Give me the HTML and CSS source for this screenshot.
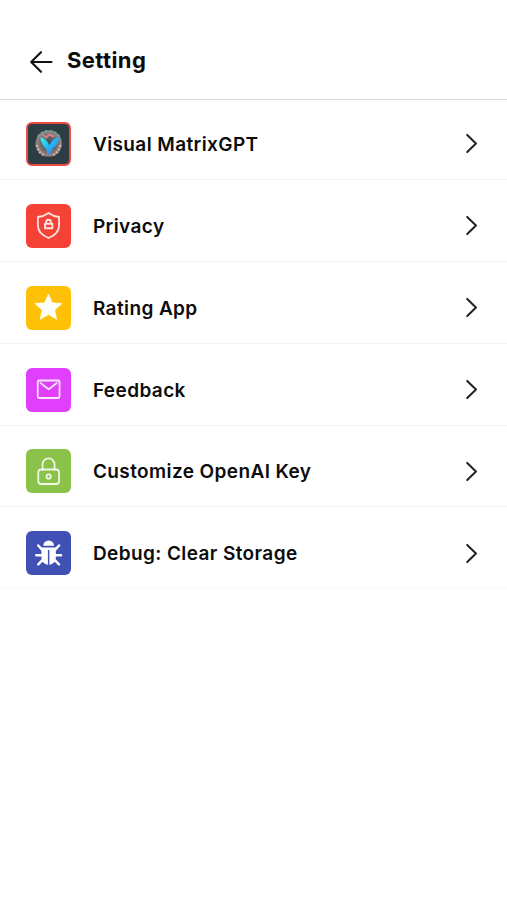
FILE: index.html
```html
<!DOCTYPE html>
<html lang="en">
<head>
<meta charset="utf-8">
<title>Setting</title>
<link rel="stylesheet" href="styles.css">
</head>
<body>
<header class="header">
  <svg class="back" viewBox="0 0 24 24"><path d="M12 2.2 2.2 12 12 21.8M2.2 12H22.5"/></svg>
  <h1 class="title">Setting</h1>
</header>
<main class="list">
  <div class="row">
    <svg class="tile tile-app" viewBox="2 2 40 40">
      <defs>
        <linearGradient id="wing" x1="0" y1="0" x2="1" y2="1"><stop offset="0" stop-color="#45f0e4"/><stop offset=".5" stop-color="#20b5f5"/><stop offset="1" stop-color="#5a62e0"/></linearGradient>
        <radialGradient id="orb"><stop offset="0" stop-color="#38505f"/><stop offset=".6" stop-color="#75686f"/><stop offset=".88" stop-color="#8f8c84"/><stop offset="1" stop-color="#25343a"/></radialGradient>
      </defs>
      <circle cx="22.500" cy="21.500" r="14" fill="url(#orb)"/>
      <path d="M11.500 15q4-6 11-6t11 6" fill="none" stroke="#6da294" stroke-width="2" stroke-dasharray="3 1.5"/>
      <path d="M10.500 23q2 8 7 10M34 23q-2 8-7 10" fill="none" stroke="#d5aaa8" stroke-width="2.500" stroke-dasharray="2 1.500"/>
      <path d="M16 12.500l4 3 3-3 5 2" fill="none" stroke="#d0838a" stroke-width="2"/>
      <path d="M14 15.500q6 0 9 8 3-7 10-8.500-1 8-6 11l-4 7q-2-1-3-6-5-4-6-11.500z" fill="url(#wing)"/>
    </svg>
    <span class="label">Visual MatrixGPT</span>
    <svg class="chevron" viewBox="0 0 14 22"><path d="M2 2l9.2 9L2 20"/></svg>
  </div>
  <div class="row">
    <svg class="tile line tile-privacy" viewBox="0 0 44 44"><path d="M22.3 9q4.700 3.500 10.500 4v8.500c0 6-4 10-10.500 12.500C15.800 31.500 11.700 27.500 11.700 21.500v-8.500q5.800-.5 10.600-4z"/><path d="M18.700 19.800h7.400v4.400h-7.400zM20 19v-1a2.300 2.300 0 0 1 4.600 0v1" stroke-width="1.900"/></svg>
    <span class="label">Privacy</span>
    <svg class="chevron" viewBox="0 0 14 22"><path d="M2 2l9.2 9L2 20"/></svg>
  </div>
  <div class="row">
    <svg class="tile tile-rating" viewBox="0 0 44 44"><path d="M22.200 8l3.900 8.700 9.700.900-7.300 6.500 2.100 9.300-8.400-4.800-8.400 4.800 2.100-9.300-7.300-6.500 9.700-.900z" fill="#fff" stroke="#fff" stroke-width=".5" stroke-linejoin="round"/></svg>
    <span class="label">Rating App</span>
    <svg class="chevron" viewBox="0 0 14 22"><path d="M2 2l9.2 9L2 20"/></svg>
  </div>
  <div class="row">
    <svg class="tile line tile-feedback" viewBox="0 0 44 44"><rect x="11.500" y="12.500" width="21.800" height="17.500" rx="1.500"/><path d="M14.200 15l8.200 6.300 8.200-6.300"/></svg>
    <span class="label">Feedback</span>
    <svg class="chevron" viewBox="0 0 14 22"><path d="M2 2l9.2 9L2 20"/></svg>
  </div>
  <div class="row">
    <svg class="tile line tile-key" viewBox="0 0 44 44"><path d="M16.300 20.500v-5.200a6 6 0 0 1 12 0v5.200"/><rect x="12" y="20.500" width="20.800" height="14.500" rx="3"/><circle cx="22.400" cy="27.500" r="2.200"/></svg>
    <span class="label">Customize OpenAI Key</span>
    <svg class="chevron" viewBox="0 0 14 22"><path d="M2 2l9.2 9L2 20"/></svg>
  </div>
  <div class="row">
    <svg class="tile tile-debug" viewBox="0 0 44 44"><path d="M17 14.800a5.400 5.400 0 0 1 10.800 0zM15.200 16.500h14.400v10.200a7.200 7.200 0 0 1-14.400 0z" fill="#fff"/><path d="M16 18.800l-4-4.300M28.800 18.800l4-4.300M15.500 24.200h-5.500M29.300 24.200h5.500M16 29.300l-4 4M28.800 29.300l4 4" fill="none" stroke="#fff" stroke-width="2.500" stroke-linecap="round"/><path d="M22.400 19v15" stroke="#3f51b5" stroke-width="1.500"/></svg>
    <span class="label">Debug: Clear Storage</span>
    <svg class="chevron" viewBox="0 0 14 22"><path d="M2 2l9.2 9L2 20"/></svg>
  </div>
</main>
</body>
</html>
```
FILE: styles.css
```css
body {
  margin: 0;
  background: #fff;
  color: #0c0c0c;
  font-family: Inter, "Liberation Sans", sans-serif;
}
.header {
  box-sizing: border-box;
  height: 100px;
  padding: 25px 29px 0;
  display: flex;
  align-items: center;
  gap: 14px;
  border-bottom: 1px solid #d9d9d9;
}
.back {
  width: 24px;
  height: 24px;
  fill: none;
  stroke: #111;
  stroke-width: 2.1;
  stroke-linecap: round;
  stroke-linejoin: round;
}
.title {
  margin: 0 0 4px;
  font-size: 22px;
  line-height: 28px;
  font-weight: 700;
  letter-spacing: 0.4px;
}
.list {
  margin-top: -2px;
}
.row {
  box-sizing: border-box;
  height: 81.900px;
  padding: 23.800px 28px 13px 26.500px;
  display: flex;
  align-items: center;
  border-bottom: 1px solid #f2f2f2;
}
.row:last-child {
  border-bottom-color: #f9f9f9;
}
.tile {
  box-sizing: border-box;
  flex: none;
  width: 44.500px;
  height: 44px;
  margin-left: -0.100px;
  border-radius: 6px;
}
.tile-app {
  background: #2d3d44;
  border: 2px solid #ee4b45;
}
.tile-privacy { background: #f44336; }
.tile-rating { background: #ffc107; }
.tile-feedback { background: #e040fb; }
.tile-key { background: #8bc34a; }
.tile-debug { background: #3f51b5; }
.line {
  fill: none;
  stroke: #fff;
  stroke-opacity: 0.85;
  stroke-width: 1.8;
  stroke-linecap: round;
  stroke-linejoin: round;
}
.label {
  flex: 1;
  margin: 2px 0 0 22px;
  font-size: 19px;
  line-height: 24px;
  font-weight: 600;
  letter-spacing: 0.4px;
}
.chevron {
  width: 14px;
  height: 21px;
  fill: none;
  stroke: #222;
  stroke-width: 2.1;
  stroke-linecap: round;
  stroke-linejoin: round;
}
```
